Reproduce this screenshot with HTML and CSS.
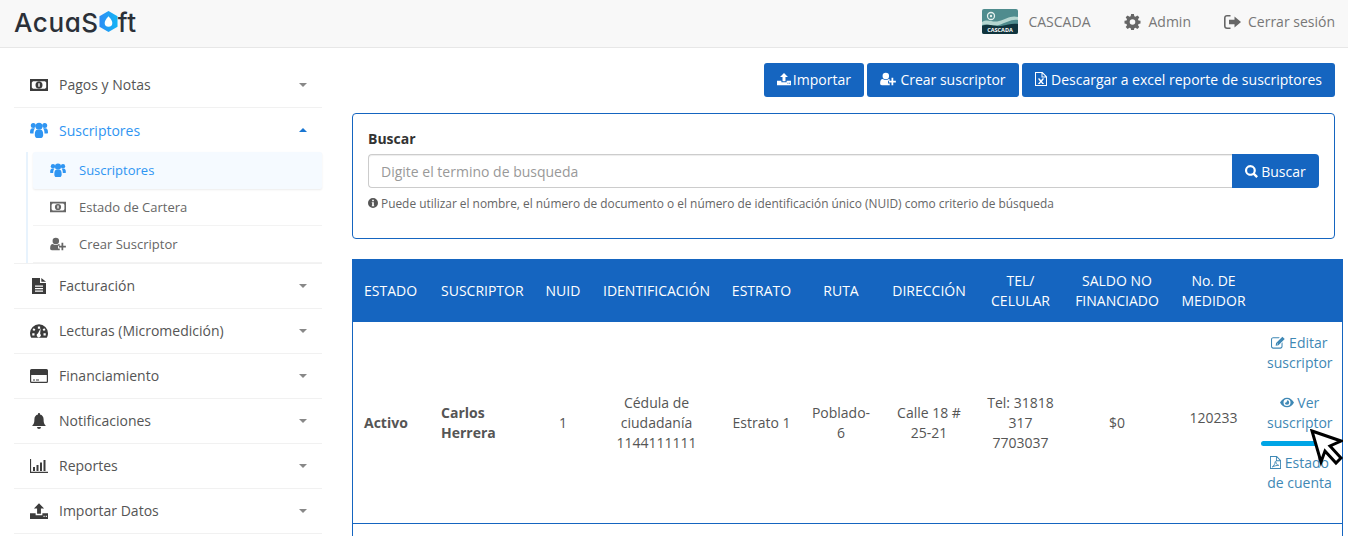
FILE: index.html
```html
<!DOCTYPE html>
<html lang="es">
<head>
<meta charset="utf-8">
<title>AcuaSoft</title>
<link rel="stylesheet" href="styles.css">
</head>
<body>
<svg class="sprite" width="0" height="0">
  <defs>
    <symbol id="i-money" viewBox="0 0 18 14"><path fill-rule="evenodd" d="M0 1h18v12H0zM3 3.200 1.800 4.400v5.200L3 10.800h12l1.200-1.200V4.400L15 3.200zM9 3.500a3.500 3.500 0 1 1 0 7 3.500 3.500 0 0 1 0-7zM8.300 5.300v3.400h1.400V5.300z"/></symbol>
    <symbol id="i-users" viewBox="0 0 18 16"><circle cx="3.300" cy="3.600" r="2.500"/><circle cx="14.700" cy="3.600" r="2.500"/><circle cx="9" cy="4.200" r="3.500"/><path d="M0 10.500c0-3 1-4.300 2.500-4.300H5c-1 1-1.500 2.800-1.500 5.300H1c-.6 0-1-.4-1-1zM18 10.500c0-3-1-4.300-2.500-4.300H13c1 1 1.500 2.800 1.500 5.300H17c.6 0 1-.4 1-1zM4.800 13c0-3.800 1-5.300 2.500-5.300h3.400c1.500 0 2.500 1.500 2.500 5.300 0 1.500-.8 3-2 3H6.800c-1.200 0-2-1.500-2-3z"/></symbol>
    <symbol id="i-useradd" viewBox="0 0 18 16"><circle cx="6.500" cy="4.500" r="3.700"/><path d="M0 13c0-3.500 1.200-5 3-5 1 .8 2.200 1.200 3.500 1.200S9 8.800 10 8l1 .5V10H9v3h2v2H2c-1.200 0-2-.8-2-2z"/><path d="M13 6.500h2V10h3v2h-3v3h-2v-3h-3v-2h3z"/></symbol>
    <symbol id="i-file" viewBox="0 0 14 16"><path fill-rule="evenodd" d="M0 0h8v5h6v11H0zM3 7.500v1.300h8V7.500zM3 10v1.300h8V10zM3 12.500v1.300h8v-1.300z"/><path d="M9.300 0 14 3.800H9.300z"/></symbol>
    <symbol id="i-gauge" viewBox="0 0 16 14"><path fill-rule="evenodd" d="M8 1a8 8 0 0 1 8 8c0 1.500-.4 2.900-1.100 4H1.100A8 8 0 0 1 0 9a8 8 0 0 1 8-8zM7 3v2h2V3zM3.200 4.500 2.200 6l1.600 1 1-1.500zM12.800 4.500l-1.600 1 1 1.500 1.600-1zM2 9v2h2V9zM12 9v2h2V9zM9.500 4.500 7 9.300a1.800 1.800 0 1 0 2 .2z"/></symbol>
    <symbol id="i-card" viewBox="0 0 18 14"><path fill-rule="evenodd" d="M1.500 0h15A1.500 1.500 0 0 1 18 1.500v11a1.500 1.500 0 0 1-1.500 1.500h-15A1.500 1.500 0 0 1 0 12.500v-11A1.500 1.500 0 0 1 1.500 0zM1.200 6v6.300a.5.500 0 0 0 .5.500h14.600a.5.500 0 0 0 .5-.5V6zM3 10.500h2v1H3zM6 10.500h3v1H6z"/></symbol>
    <symbol id="i-bell" viewBox="0 0 14 16"><path d="M7 0c.6 0 1 .4 1 1v.6c2.300.5 3.600 2.300 3.600 4.600 0 4 .9 5 2.400 6.800H0c1.500-1.800 2.400-2.800 2.400-6.800 0-2.300 1.300-4.100 3.600-4.600V1c0-.6.400-1 1-1zM5 14h4a2 2 0 0 1-4 0z"/></symbol>
    <symbol id="i-chart" viewBox="0 0 18 14"><path d="M0 0h1.100v12.800H18V14H0zM3 8h2v4H3zM6.500 6h2v6h-2zM10 3.500h2V12h-2zM13.500 1h2v11h-2z"/></symbol>
    <symbol id="i-upload" viewBox="0 0 16 14"><path d="M8 0l4.500 4.800H9.700V9.500H6.300V4.800H3.500zM0 9h5v1.700h6V9h5v5H0zM12 11.300v1h1v-1zM14 11.300v1h1v-1z"/></symbol>
    <symbol id="i-xls" viewBox="0 0 12 14"><path fill-rule="evenodd" d="M0 0h7.500L12 4.500V14H0zM1 1v12h10V5.500H6.500V1zM7.500 1.500v3h3zM2.800 6.500h2l1.200 2 1.200-2h2l-2.200 2.900 2.200 2.600h-2L6 10.300 4.800 12h-2l2.200-2.600z"/></symbol>
    <symbol id="i-pdf" viewBox="0 0 12 14"><path fill-rule="evenodd" d="M0 0h7.500L12 4.500V14H0zM1 1v12h10V5.500H6.500V1zM7.500 1.500v3h3z"/><path fill="none" stroke="currentColor" d="M2.500 11.800C4 11 5.500 8.500 5.600 6.300c0-.7.800-.7.800 0 .1 2.200 1.600 3.700 3.100 3.800-2 0-4.500.5-7 1.700z"/></symbol>
    <symbol id="i-edit" viewBox="0 0 16 14"><path d="M2.500 1H10L8.900 2.200H2.500c-.7 0-1.300.6-1.300 1.300v7.800c0 .7.600 1.300 1.300 1.300h8.200c.7 0 1.300-.6 1.300-1.300V8l1.200-1.200v4.700c0 1.400-1.100 2.500-2.500 2.500H2.500C1.100 14 0 12.900 0 11.500V3.500C0 2.100 1.100 1 2.500 1z"/><path d="M13 .3 15.700 3 8.500 10.200l-3.200.5.500-3.200zM7 7.800l-.2 1.400 1.400-.2z"/></symbol>
    <symbol id="i-eye" viewBox="0 0 16 12"><path fill-rule="evenodd" d="M8 .5c3.500 0 6.300 2.400 8 5.500-1.700 3.100-4.500 5.500-8 5.500S1.700 9.100 0 6c1.700-3.100 4.500-5.500 8-5.500zM8 2a4 4 0 1 0 0 8 4 4 0 0 0 0-8zM8 3.500A2.500 2.500 0 1 1 5.500 6c.7.600 2.500.3 2.500-2.500z"/></symbol>
  </defs>
</svg>

<header class="topbar">
  <div class="logo">
    <span class="logo-text">AcuaS</span><svg class="logo-hex" viewBox="0 0 20 22"><defs><linearGradient id="hexfill" x1="0" y1="0" x2="1" y2="0"><stop offset="0" stop-color="#2f8df5"/><stop offset="1" stop-color="#12b4f5"/></linearGradient></defs><path fill="url(#hexfill)" d="M10 0l9.500 5.500v11L10 22 .5 16.500v-11z"/><path fill="#fff" d="M10 5.500c2.700 3 4 5 4 7a4 4 0 0 1-8 0c0-2 1.300-4 4-7z"/></svg><span class="logo-text">ft</span>
  </div>
  <nav class="top-nav">
    <a class="top-link top-link-org"><svg class="cascada" viewBox="0 0 36 25"><rect width="36" height="25" rx="2" fill="#4f8c8e"/><path fill="#b5d6d0" d="M0 13c6-4 10 1 17-1s12-6 19-4v3c-7-1-12 3-19 5s-12-2-17 0z"/><path fill="#10343d" d="M0 17c8-3 12 1 19 0s11-3 17-2v8a2 2 0 0 1-2 2H2a2 2 0 0 1-2-2z"/><circle cx="9" cy="7" r="3.500" fill="none" stroke="#e4f0ee" stroke-width="1.300"/><circle cx="9" cy="7" r="1.200" fill="#e4f0ee"/><text x="18" y="22.800" class="cascada-label">CASCADA</text></svg><span>CASCADA</span></a>
    <a class="top-link"><svg class="top-icon" viewBox="0 0 16 16"><path fill-rule="evenodd" d="M6.600 0h2.800l.4 2.200 1.200.5L12.900 1.400l1.900 1.900-1.300 1.900.5 1.200 2 .4v2.800l-2 .4-.5 1.200 1.300 1.900-1.900 1.900-1.900-1.300-1.200.5-.4 2H6.600l-.4-2-1.200-.5-1.900 1.300-1.900-1.900 1.300-1.900-.5-1.200-2-.4V6.800l2-.4.5-1.200-1.300-1.900 1.900-1.900 1.900 1.300 1.200-.5zM8 5.200a2.800 2.800 0 1 0 0 5.600 2.800 2.800 0 0 0 0-5.600z"/></svg><span>Admin</span></a>
    <a class="top-link"><svg class="top-icon" viewBox="0 0 17 14"><path d="M3 0h3.500v1.600H3c-.8 0-1.400.6-1.400 1.400v8c0 .8.600 1.400 1.400 1.400h3.500V14H3c-1.700 0-3-1.300-3-3V3c0-1.700 1.300-3 3-3z"/><path d="M10.500 1.500 17 7l-6.500 5.500V9.300H5V4.700h5.500z"/></svg><span>Cerrar sesión</span></a>
  </nav>
</header>

<div class="layout">
  <aside class="sidebar">
    <div class="menu-item"><svg class="menu-icon"><use href="#i-money"/></svg><span class="menu-label">Pagos y Notas</span><i class="caret"></i></div>
    <div class="menu-item is-open"><svg class="menu-icon"><use href="#i-users"/></svg><span class="menu-label">Suscriptores</span><i class="caret caret-up"></i></div>
    <div class="submenu">
      <div class="sublist">
        <div class="sub-item is-active"><svg class="sub-icon"><use href="#i-users"/></svg><span>Suscriptores</span></div>
        <div class="sub-item"><svg class="sub-icon"><use href="#i-money"/></svg><span>Estado de Cartera</span></div>
        <div class="sub-item"><svg class="sub-icon"><use href="#i-useradd"/></svg><span>Crear Suscriptor</span></div>
      </div>
    </div>
    <div class="menu-item"><svg class="menu-icon"><use href="#i-file"/></svg><span class="menu-label">Facturación</span><i class="caret"></i></div>
    <div class="menu-item"><svg class="menu-icon"><use href="#i-gauge"/></svg><span class="menu-label">Lecturas (Micromedición)</span><i class="caret"></i></div>
    <div class="menu-item"><svg class="menu-icon"><use href="#i-card"/></svg><span class="menu-label">Financiamiento</span><i class="caret"></i></div>
    <div class="menu-item"><svg class="menu-icon"><use href="#i-bell"/></svg><span class="menu-label">Notificaciones</span><i class="caret"></i></div>
    <div class="menu-item"><svg class="menu-icon"><use href="#i-chart"/></svg><span class="menu-label">Reportes</span><i class="caret"></i></div>
    <div class="menu-item"><svg class="menu-icon"><use href="#i-upload"/></svg><span class="menu-label">Importar Datos</span><i class="caret"></i></div>
  </aside>

  <main class="content">
    <div class="actions">
      <a class="btn"><svg class="btn-icon"><use href="#i-upload"/></svg>Importar</a>
      <a class="btn"><svg class="btn-icon btn-icon-user"><use href="#i-useradd"/></svg>Crear suscriptor</a>
      <a class="btn"><svg class="btn-icon btn-icon-file"><use href="#i-xls"/></svg>Descargar a excel reporte de suscriptores</a>
    </div>

    <section class="search-card">
      <label class="search-label">Buscar</label>
      <div class="search-row">
        <input class="search-input" type="text" placeholder="Digite el termino de busqueda">
        <button class="search-btn"><svg class="search-icon" viewBox="0 0 14 14"><path fill-rule="evenodd" d="M5.800 0a5.800 5.800 0 0 1 4.900 8.900l3.300 3.300-1.800 1.800-3.300-3.300A5.800 5.800 0 1 1 5.800 0zm0 2.300a3.500 3.500 0 1 0 0 7 3.500 3.500 0 0 0 0-7z"/></svg>Buscar</button>
      </div>
      <p class="search-help"><svg class="help-icon" viewBox="0 0 12 12"><path fill-rule="evenodd" d="M6 0a6 6 0 1 1 0 12A6 6 0 0 1 6 0zM5 2v2h2V2zM4.500 5v1H5v3h-.5v1h3V9H7V5z"/></svg>Puede utilizar el nombre, el número de documento o el número de identificación único (NUID) como criterio de búsqueda</p>
    </section>

    <table class="grid">
      <thead>
        <tr>
          <th class="left">ESTADO</th><th class="left">SUSCRIPTOR</th><th>NUID</th><th>IDENTIFICACIÓN</th><th>ESTRATO</th><th>RUTA</th><th>DIRECCIÓN</th><th>TEL/<br>CELULAR</th><th>SALDO NO<br>FINANCIADO</th><th>No. DE<br>MEDIDOR</th><th></th>
        </tr>
      </thead>
      <tbody>
        <tr>
          <td class="strong left">Activo</td>
          <td class="strong left">Carlos Herrera</td>
          <td>1</td>
          <td>Cédula de ciudadanía<br>1144111111</td>
          <td>Estrato 1</td>
          <td>Poblado-6</td>
          <td>Calle 18 # 25-21</td>
          <td>Tel: 31818 317 7703037</td>
          <td>$0</td>
          <td class="meter">120233</td>
          <td class="links">
            <a class="row-link"><svg class="link-icon"><use href="#i-edit"/></svg> Editar suscriptor</a>
            <a class="row-link"><svg class="link-icon"><use href="#i-eye"/></svg> Ver suscriptor</a>
            <a class="row-link"><svg class="link-icon link-icon-file"><use href="#i-pdf"/></svg> Estado de cuenta</a>
          </td>
        </tr>
        <tr><td class="row-tail" colspan="11"></td></tr>
      </tbody>
    </table>
  </main>
</div>

<div class="overlay-bar"></div>
<svg class="cursor" viewBox="0 0 33 38"><path fill="#fff" stroke="#000" stroke-width="3" d="M2 2l29 10-11 5 11 12-5 5-11-12-4 11z"/></svg>
</body>
</html>
```

FILE: styles.css
```css
* { box-sizing: border-box; }

html, body {
  margin: 0;
  height: 536px;
  overflow: hidden;
  background: #fff;
  font-family: "Open Sans", "Noto Sans", sans-serif;
  font-size: 14px;
  color: #555;
}

.sprite { position: absolute; }

svg { fill: currentColor; }

.topbar {
  height: 48px;
  background: #f8f8f8;
  border-bottom: 1px solid #e7e7e7;
  display: flex;
  align-items: center;
  justify-content: space-between;
  padding: 0 13px 4px 14px;
}

.logo {
  display: flex;
  align-items: center;
  height: 24px;
  margin-top: 3px;
}

.logo-text {
  font-family: "Inter", "Open Sans", sans-serif;
  font-feature-settings: "cv11";
  font-size: 26px;
  font-weight: 500;
  letter-spacing: .6px;
  color: #2b3038;
  line-height: 24px;
}

.logo-hex {
  width: 19px;
  height: 21px;
  margin: -4px 0 0 0;
  flex: none;
}

.top-nav {
  display: flex;
  align-items: center;
  gap: 33px;
}

.top-link {
  display: flex;
  align-items: center;
  color: #777;
  font-size: 14px;
}

.top-link-org { margin-right: 1px; }

.top-icon {
  width: 17px;
  height: 16px;
  margin-right: 7px;
  color: #666;
}

.cascada {
  width: 36px;
  height: 25px;
  margin-right: 10px;
}

.cascada-label {
  font-family: "Open Sans", sans-serif;
  font-size: 5.500px;
  font-weight: 700;
  fill: #fff;
  text-anchor: middle;
}

.layout {
  display: flex;
}

.sidebar {
  width: 352px;
  flex: none;
  padding: 15px 30px 0 14px;
}

.menu-item {
  height: 45px;
  display: flex;
  align-items: center;
  padding: 0 15px 1px 16px;
  border-bottom: 1px solid #f1f1f1;
  color: #555;
}

.menu-item.is-open {
  height: 44px;
  padding-bottom: 0;
  color: #2f95f2;
  border-bottom: 0;
}

.menu-icon {
  width: 18px;
  height: 16px;
  margin-right: 11px;
  color: #3c3c3c;
  flex: none;
}

.is-open .menu-icon { color: #2f95f2; }

.menu-label { flex: 1; }

.caret {
  width: 0;
  height: 0;
  border-left: 4px solid transparent;
  border-right: 4px solid transparent;
  border-top: 4px solid #888;
}

.caret-up {
  border-top: 0;
  border-bottom: 4px solid #1976d2;
}

.submenu {
  height: 112px;
  padding-left: 12px;
  border-bottom: 1px solid #f1f1f1;
}

.sublist {
  height: 111px;
  padding-left: 5px;
  border-left: 2px solid #e8f3fd;
}

.sub-item {
  height: 37px;
  display: flex;
  align-items: center;
  padding-left: 18px;
  font-size: 13px;
  color: #666;
  border-bottom: 1px solid #f3f3f3;
}

.sub-item.is-active {
  background: #f5faff;
  color: #2f95f2;
  border-radius: 2px;
  box-shadow: 0 1px 2px rgba(0, 0, 0, .08);
  border-bottom: 0;
  padding-bottom: 1px;
}

.sub-icon {
  width: 16px;
  height: 14px;
  margin-right: 13px;
  margin-left: -1px;
  flex: none;
}

.content {
  flex: 1;
  padding: 15px 13px 0 0;
  min-width: 0;
}

.actions {
  display: flex;
  justify-content: flex-end;
  gap: 3.5px;
  margin-bottom: 16px;
}

.btn {
  height: 34px;
  display: flex;
  align-items: center;
  padding: 0 13px 2px;
  background: #1565c0;
  color: #fff;
  border-radius: 3px;
  font-size: 14px;
}

.btn-icon {
  width: 14px;
  height: 14px;
  margin-right: 2px;
}

.btn-icon-user {
  width: 16px;
  margin-right: 4px;
}

.btn-icon-file {
  width: 12px;
  margin-right: 4px;
}

.search-card {
  height: 126px;
  border: 1px solid #1565c0;
  border-radius: 4px;
  padding: 15px;
  margin-bottom: 20px;
}

.search-label {
  display: block;
  font-weight: 700;
  color: #333;
  line-height: 20px;
  margin-bottom: 5px;
}

.search-row {
  display: flex;
  height: 34px;
}

.search-input {
  flex: 1;
  min-width: 0;
  height: 34px;
  border: 1px solid #ccc;
  border-right: 0;
  border-radius: 4px 0 0 4px;
  padding: 0 12px;
  font: 14px "Open Sans", sans-serif;
  color: #555;
  box-shadow: inset 0 1px 1px rgba(0, 0, 0, .075);
  outline: 0;
}

.search-input::placeholder { color: #999; opacity: 1; }

.search-btn {
  width: 87px;
  height: 34px;
  border: 0;
  border-radius: 0 4px 4px 0;
  background: #1565c0;
  color: #fff;
  font: 14px "Open Sans", sans-serif;
  display: flex;
  align-items: center;
  justify-content: center;
  padding: 0;
}

.search-icon {
  width: 13px;
  height: 13px;
  margin-right: 3px;
}

.search-help {
  margin: 7px 0 0;
  font-size: 11.9px;
  line-height: 16px;
  color: #666;
  display: flex;
  align-items: center;
}

.help-icon {
  width: 10px;
  height: 10px;
  margin-right: 3px;
  color: #555;
}

.grid {
  width: 991px;
  border-collapse: separate;
  border-spacing: 0;
  table-layout: fixed;
  border-left: 1px solid #1565c0;
  border-right: 1px solid #1565c0;
}

.grid th {
  background: #1565c0;
  color: #fff;
  font-weight: 400;
  font-size: 14px;
  line-height: 20px;
  height: 63px;
  padding: 0 4px;
  text-align: center;
}

.grid th.left { text-align: left; padding-left: 11px; }

.grid td {
  text-align: center;
  line-height: 20px;
  padding: 10px;
  height: 202px;
  border-bottom: 1px solid #1565c0;
  color: #555;
}

.grid td.left { text-align: left; padding-left: 11px; }
.grid td.strong { font-weight: 700; }
.grid td.meter { padding-bottom: 20px; }

.grid td.row-tail {
  height: 12px;
  padding: 0;
  border-bottom: 0;
  line-height: 0;
}

.grid th:nth-child(1) { width: 77px; }
.grid th:nth-child(2) { width: 105px; }
.grid th:nth-child(3) { width: 56px; }
.grid th:nth-child(4) { width: 131px; }
.grid th:nth-child(5) { width: 79px; }
.grid th:nth-child(6) { width: 80px; }
.grid th:nth-child(7) { width: 96px; }
.grid th:nth-child(8) { width: 87px; }
.grid th:nth-child(9) { width: 106px; }
.grid th:nth-child(10) { width: 87px; }
.grid th:nth-child(11) { width: 85px; }

.row-link {
  display: block;
  color: #3f88b5;
  margin-bottom: 20px;
}

.link-icon {
  width: 14px;
  height: 13px;
  vertical-align: -1px;
}

.link-icon-file { width: 11px; }

.overlay-bar {
  position: absolute;
  left: 1261px;
  top: 441px;
  width: 62px;
  height: 5px;
  border-radius: 3px;
  background: #00a5e6;
}

.cursor {
  position: absolute;
  left: 1310px;
  top: 429px;
  width: 33px;
  height: 38px;
}
```
